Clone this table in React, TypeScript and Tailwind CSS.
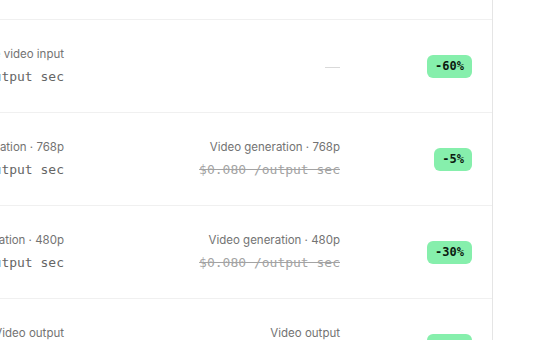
type Row = {
  label: string;
  price: string;
  refLabel?: string;
  refPrice?: string;
  discount: string;
};

const rows: Row[] = [
  { label: 'Reference video input', price: '$0.032 /output sec', discount: '-60%' },
  {
    label: 'Video generation · 768p',
    price: '$0.076 /output sec',
    refLabel: 'Video generation · 768p',
    refPrice: '$0.080 /output sec',
    discount: '-5%',
  },
  {
    label: 'Video generation · 480p',
    price: '$0.056 /output sec',
    refLabel: 'Video generation · 480p',
    refPrice: '$0.080 /output sec',
    discount: '-30%',
  },
  {
    label: 'Video output',
    price: '$0.040 /output sec',
    refLabel: 'Video output',
    refPrice: '$0.100 /output sec',
    discount: '-60%',
  },
];

const sans = "font-['Inter','Noto_Sans',sans-serif]";
const mono = "font-['DejaVu_Sans_Mono','Liberation_Mono',monospace]";

function PriceRow({ row }: { row: Row }) {
  return (
    <div className="flex h-[93px] shrink-0 items-center border-t border-[#f0f0f0]">
      <div className="flex w-[64px] shrink-0 justify-end">
        <div className="shrink-0 whitespace-nowrap text-right">
          <div className={`${sans} mb-1.5 text-[11.5px] leading-4 text-[#737373]`}>{row.label}</div>
          <div className={`${mono} text-[13px] leading-[18px] text-[#666666]`}>{row.price}</div>
        </div>
      </div>
      <div className="flex w-[276px] shrink-0 justify-end">
        {row.refLabel ? (
          <div className="whitespace-nowrap text-right">
            <div className={`${sans} mb-1.5 text-[11.5px] leading-4 text-[#737373]`}>{row.refLabel}</div>
            <div className={`${mono} text-[13px] leading-[18px] text-[#a3a3a3] line-through`}>
              {row.refPrice}
            </div>
          </div>
        ) : (
          <div className="mt-0.5 h-px w-[15px] bg-[#d9d9d9]" />
        )}
      </div>
      <div className="flex flex-1 justify-end pr-5">
        <span
          className={`${mono} rounded-md bg-[#86efac] px-2 py-[3px] text-[12px] font-bold leading-[17px] text-[#0c1a10]`}
        >
          {row.discount}
        </span>
      </div>
    </div>
  );
}

export default function App() {
  return (
    <div className="h-[340px] w-[540px] overflow-hidden bg-white">
      <div className="flex h-full w-[493px] flex-col border-r border-[#e5e5e5]">
        <div className="h-[19px] shrink-0" />
        {rows.map((row) => (
          <PriceRow key={row.label} row={row} />
        ))}
      </div>
    </div>
  );
}
